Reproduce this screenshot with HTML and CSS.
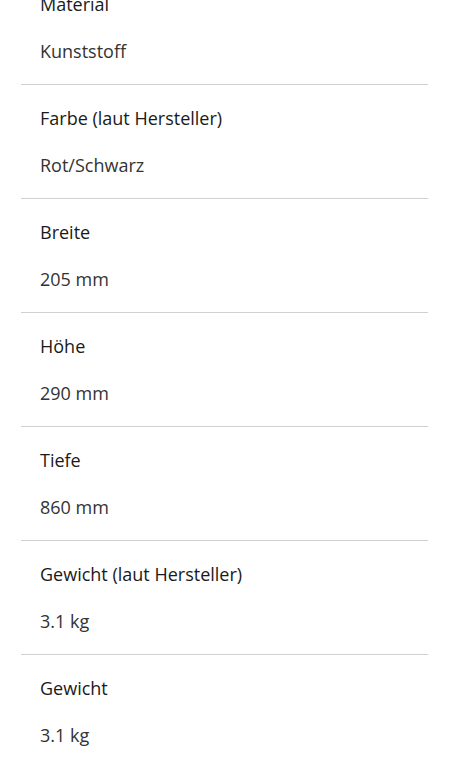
FILE: index.html
```html
<!DOCTYPE html>
<html>
<head>
	<meta charset="UTF-8">
	<meta name="viewport" content="width=device-width">
	<title>Technische Daten</title>
	<link rel="stylesheet" href="styles.css">
</head>
<body>
	<dl class="specs">
		<div class="row">
			<dt>Material</dt>
			<dd>Kunststoff</dd>
		</div>
		<div class="row">
			<dt>Farbe (laut Hersteller)</dt>
			<dd>Rot/Schwarz</dd>
		</div>
		<div class="row">
			<dt>Breite</dt>
			<dd>205 mm</dd>
		</div>
		<div class="row">
			<dt>Höhe</dt>
			<dd>290 mm</dd>
		</div>
		<div class="row">
			<dt>Tiefe</dt>
			<dd>860 mm</dd>
		</div>
		<div class="row">
			<dt>Gewicht (laut Hersteller)</dt>
			<dd>3.1 kg</dd>
		</div>
		<div class="row">
			<dt>Gewicht</dt>
			<dd>3.1 kg</dd>
		</div>
	</dl>
</body>
</html>
```
FILE: styles.css
```css
html,body{
	margin: 0;
	background: #fff;
	overflow: hidden;
}
body{
	font-family: "Open Sans", "Noto Sans", sans-serif;
}
.specs{
	margin: -29px 21px 0;
	padding: 0;
}
.row{
	padding: 21px 19px;
	border-bottom: 1px solid #d0d0d0;
	display: flex;
	flex-direction: column;
	gap: 23px;
}
.row dt,
.row dd{
	margin: 0;
	font-size: 18px;
	line-height: 24px;
}
.row dt{
	color: #1a1a1a;
}
.row dd{
	color: #333;
}
```
